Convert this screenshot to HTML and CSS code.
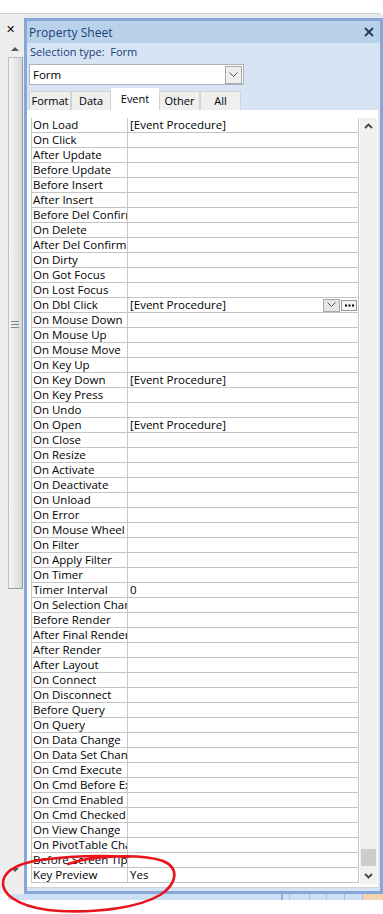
FILE: index.html
```html
<!DOCTYPE html>
<html>
<head>
<meta charset="utf-8">
<link rel="stylesheet" href="styles.css">
</head>
<body>
<div class="topbar"></div>
<div class="main">
  <div class="strip">
    <div class="strip-x">&#x2715;</div>
    <div class="tri-up"></div>
    <div class="sthumb"><div class="grip"></div></div>
    <div class="strip-space"></div>
    <div class="tri-down"></div>
  </div>
  <div class="panel">
    <div class="phead">
      <span class="ptitle">Property Sheet</span>
      <svg class="pclose" width="10" height="10" viewBox="0 0 10 10"><path d="M1 1 L9 9 M9 1 L1 9" stroke="#1b3a6b" stroke-width="1.8" fill="none"/></svg>
    </div>
    <div class="seltype">Selection type:&nbsp; Form</div>
    <div class="combo">
      <span class="combo-text">Form</span>
      <span class="combo-btn"><svg width="9" height="6" viewBox="0 0 9 6"><path d="M0.5 0.5 L4.5 4.5 L8.5 0.5" stroke="#555" stroke-width="1" fill="none"/></svg></span>
    </div>
    <div class="tabs">
      <div class="tab t-format">Format</div>
      <div class="tab t-data">Data</div>
      <div class="tab t-event active">Event</div>
      <div class="tab t-other">Other</div>
      <div class="tab t-all">All</div>
    </div>
    <div class="pane">
      <div class="grid">
        <div class="row"><div class="k">On Load</div><div class="v">[Event Procedure]</div></div>
        <div class="row"><div class="k">On Click</div><div class="v"></div></div>
        <div class="row"><div class="k">After Update</div><div class="v"></div></div>
        <div class="row"><div class="k">Before Update</div><div class="v"></div></div>
        <div class="row"><div class="k">Before Insert</div><div class="v"></div></div>
        <div class="row"><div class="k">After Insert</div><div class="v"></div></div>
        <div class="row"><div class="k">Before Del Confirm</div><div class="v"></div></div>
        <div class="row"><div class="k">On Delete</div><div class="v"></div></div>
        <div class="row"><div class="k">After Del Confirm</div><div class="v"></div></div>
        <div class="row"><div class="k">On Dirty</div><div class="v"></div></div>
        <div class="row"><div class="k">On Got Focus</div><div class="v"></div></div>
        <div class="row"><div class="k">On Lost Focus</div><div class="v"></div></div>
        <div class="row"><div class="k">On Dbl Click</div><div class="v v-active"><span class="vt">[Event Procedure]</span><span class="dd-btn"><svg width="9" height="6" viewBox="0 0 9 6"><path d="M0.5 0.5 L4.5 4.5 L8.5 0.5" stroke="#555" stroke-width="1" fill="none"/></svg></span><span class="build-btn"><svg width="9" height="3" viewBox="0 0 9 3"><rect x="0" y="0.5" width="2" height="2" fill="#000"/><rect x="3.5" y="0.5" width="2" height="2" fill="#000"/><rect x="7" y="0.5" width="2" height="2" fill="#000"/></svg></span></div></div>
        <div class="row"><div class="k">On Mouse Down</div><div class="v"></div></div>
        <div class="row"><div class="k">On Mouse Up</div><div class="v"></div></div>
        <div class="row"><div class="k">On Mouse Move</div><div class="v"></div></div>
        <div class="row"><div class="k">On Key Up</div><div class="v"></div></div>
        <div class="row"><div class="k">On Key Down</div><div class="v">[Event Procedure]</div></div>
        <div class="row"><div class="k">On Key Press</div><div class="v"></div></div>
        <div class="row"><div class="k">On Undo</div><div class="v"></div></div>
        <div class="row"><div class="k">On Open</div><div class="v">[Event Procedure]</div></div>
        <div class="row"><div class="k">On Close</div><div class="v"></div></div>
        <div class="row"><div class="k">On Resize</div><div class="v"></div></div>
        <div class="row"><div class="k">On Activate</div><div class="v"></div></div>
        <div class="row"><div class="k">On Deactivate</div><div class="v"></div></div>
        <div class="row"><div class="k">On Unload</div><div class="v"></div></div>
        <div class="row"><div class="k">On Error</div><div class="v"></div></div>
        <div class="row"><div class="k">On Mouse Wheel</div><div class="v"></div></div>
        <div class="row"><div class="k">On Filter</div><div class="v"></div></div>
        <div class="row"><div class="k">On Apply Filter</div><div class="v"></div></div>
        <div class="row"><div class="k">On Timer</div><div class="v"></div></div>
        <div class="row"><div class="k">Timer Interval</div><div class="v">0</div></div>
        <div class="row"><div class="k">On Selection Change</div><div class="v"></div></div>
        <div class="row"><div class="k">Before Render</div><div class="v"></div></div>
        <div class="row"><div class="k">After Final Render</div><div class="v"></div></div>
        <div class="row"><div class="k">After Render</div><div class="v"></div></div>
        <div class="row"><div class="k">After Layout</div><div class="v"></div></div>
        <div class="row"><div class="k">On Connect</div><div class="v"></div></div>
        <div class="row"><div class="k">On Disconnect</div><div class="v"></div></div>
        <div class="row"><div class="k">Before Query</div><div class="v"></div></div>
        <div class="row"><div class="k">On Query</div><div class="v"></div></div>
        <div class="row"><div class="k">On Data Change</div><div class="v"></div></div>
        <div class="row"><div class="k">On Data Set Change</div><div class="v"></div></div>
        <div class="row"><div class="k">On Cmd Execute</div><div class="v"></div></div>
        <div class="row"><div class="k">On Cmd Before Execute</div><div class="v"></div></div>
        <div class="row"><div class="k">On Cmd Enabled</div><div class="v"></div></div>
        <div class="row"><div class="k">On Cmd Checked</div><div class="v"></div></div>
        <div class="row"><div class="k">On View Change</div><div class="v"></div></div>
        <div class="row"><div class="k">On PivotTable Change</div><div class="v"></div></div>
        <div class="row"><div class="k">Before Screen Tip</div><div class="v"></div></div>
        <div class="row"><div class="k">Key Preview</div><div class="v">Yes</div></div>
      </div>
      <div class="vscroll">
        <svg class="chev" width="9" height="6" viewBox="0 0 9 6"><path d="M1 5 L4.5 1.5 L8 5" stroke="#444" stroke-width="1.8" fill="none"/></svg>
        <div class="vs-track"></div>
        <div class="vs-thumb"></div>
        <svg class="chev" width="9" height="6" viewBox="0 0 9 6"><path d="M1 1 L4.5 4.5 L8 1" stroke="#444" stroke-width="1.8" fill="none"/></svg>
      </div>
    </div>
  </div>
</div>
<div class="bottombar">
  <div class="bb-gap"></div>
  <div class="bb-seg bb-wide"></div>
  <div class="bb-seg bb-s1"></div>
  <div class="bb-seg bb-s2"></div>
  <div class="bb-seg bb-s3"></div>
  <div class="bb-seg bb-s4"></div>
  <div class="bb-seg bb-s5"></div>
  <div class="bb-hot"></div>
</div>
<svg class="annot" width="383" height="914" viewBox="0 0 383 914">
  <path d="M68 864 C 90 856, 140 853, 163 861 C 180 868, 177 884, 160 895 C 140 907, 100 913, 60 911 C 25 909, 5 898, 3 885 C 2 872, 15 864, 40 860 C 70 856, 100 855, 128 857" stroke="#e8141c" stroke-width="2.6" fill="none" stroke-linecap="round"/>
</svg>
</body>
</html>
```
FILE: styles.css
```css
* { box-sizing: border-box; }
html, body { margin: 0; padding: 0; }
body {
  width: 383px;
  height: 914px;
  overflow: hidden;
  background: #ffffff;
  font-family: "Open Sans", "Noto Sans", sans-serif;
  font-size: 11.5px;
  color: #000;
  position: relative;
  display: flex;
  flex-direction: column;
}
.topbar {
  height: 14px;
  flex: none;
  background: #ffffff;
  border-bottom: 1px solid #cfcfcf;
  margin-right: 3px;
}
.main {
  height: 880px;
  flex: none;
  display: flex;
  background: #e4e9ef;
}
.strip {
  width: 24px;
  flex: none;
  background: #eeeeee;
  display: flex;
  flex-direction: column;
  align-items: center;
}
.strip-x {
  margin-top: 9px;
  margin-right: 3px;
  height: 14px;
  font-size: 11px;
  line-height: 14px;
  font-weight: bold;
  font-family: "DejaVu Sans", sans-serif;
}
.tri-up {
  margin-top: 10px;
  margin-left: 6px;
  width: 0; height: 0;
  border-left: 4px solid transparent;
  border-right: 4px solid transparent;
  border-bottom: 4px solid #505a66;
}
.sthumb {
  margin-top: 6px;
  margin-left: 6px;
  width: 15px;
  height: 532px;
  background: linear-gradient(to right, #f6f6f6, #e3e3e3 70%, #d6d6d6);
  border: 1px solid #b8bfca;
  border-right-color: #8f9aaa;
  border-bottom-color: #8f9aaa;
  border-radius: 1px;
  display: flex;
  align-items: center;
  justify-content: center;
}
.grip {
  width: 8px;
  height: 7px;
  border-top: 1px solid #7d8591;
  border-bottom: 1px solid #7d8591;
  margin-top: 2px;
  background: linear-gradient(#7d8591, #7d8591) center/8px 1px no-repeat;
}
.strip-space { flex: 1; }
.tri-down {
  margin-bottom: 22px;
  margin-left: 6px;
  width: 0; height: 0;
  border-left: 4px solid transparent;
  border-right: 4px solid transparent;
  border-top: 4px solid #505a66;
}
.panel {
  flex: 1;
  margin-top: 4px;
  border: 3px solid #87a7d6;
  background: #d6e4f3;
  display: flex;
  flex-direction: column;
}
.phead {
  height: 22px;
  flex: none;
  background: #bad1ea;
  display: flex;
  align-items: center;
  justify-content: space-between;
  padding-left: 2px;
  padding-right: 6px;
}
.ptitle {
  font-size: 12px;
  color: #17407a;
}
.pclose { display: block; }
.seltype {
  height: 19px;
  flex: none;
  line-height: 17px;
  padding-left: 3px;
  color: #17407a;
  font-size: 11px;
}
.combo {
  margin-top: 2px;
  margin-left: 2px;
  width: 215px;
  height: 21px;
  flex: none;
  background: #ffffff;
  border: 1px solid #a9b1bd;
  display: flex;
  align-items: center;
  justify-content: space-between;
  padding-left: 3px;
  padding-right: 1px;
}
.combo-btn {
  width: 17px;
  height: 18px;
  background: #eeeeee;
  border: 1px solid #a8a8a8;
  display: flex;
  align-items: center;
  justify-content: center;
}
.tabs {
  margin-top: 6px;
  margin-left: 2px;
  height: 19px;
  flex: none;
  display: flex;
  align-items: flex-end;
}
.tab {
  height: 19px;
  background: #efefef;
  border: 1px solid #d3d3d3;
  border-bottom: none;
  line-height: 18px;
  text-align: center;
  font-size: 11px;
  white-space: nowrap;
}
.t-format { width: 42px; }
.t-data { width: 40px; }
.t-event { width: 48px; }
.t-other { width: 41px; }
.t-all { width: 41px; }
.tab.active {
  height: 22px;
  background: #ffffff;
  border-color: #ffffff;
  line-height: 20px;
}
.pane {
  flex: 1;
  margin-right: 2px;
  margin-bottom: 3px;
  background: #ffffff;
  display: flex;
  align-items: flex-start;
  padding: 8px 1px 0 4px;
  border-bottom: 1px solid #d2d2d2;
}
.grid {
  width: 328px;
  border-left: 1px solid #c8c8c8;
  border-right: 1px solid #c8c8c8;
}
.row {
  height: 15px;
  display: flex;
  border-bottom: 1px solid #c4c4c4;
}
.k {
  width: 96px;
  flex: none;
  border-right: 1px solid #c8c8c8;
  padding-left: 1px;
  line-height: 14px;
  white-space: nowrap;
  overflow: hidden;
}
.v {
  flex: 1;
  padding-left: 2px;
  line-height: 14px;
  white-space: nowrap;
  overflow: hidden;
}
.v-active {
  display: flex;
  align-items: center;
  padding-right: 1px;
}
.vt { flex: 1; }
.dd-btn {
  width: 17px;
  height: 13px;
  background: #e6e6e6;
  border: 1px solid #a8a8a8;
  display: flex;
  align-items: center;
  justify-content: center;
  margin-right: 1px;
}
.build-btn {
  width: 16px;
  height: 11px;
  background: #f4f4f4;
  border: 1px solid #9a9a9a;
  display: flex;
  align-items: center;
  justify-content: center;
}
.vscroll {
  margin-left: 1px;
  width: 17px;
  height: 766px;
  background: #f0f0f0;
  display: flex;
  flex-direction: column;
  align-items: center;
  padding-top: 5px;
  padding-bottom: 5px;
}
.chev { display: block; flex: none; }
.vs-track { flex: 1; }
.vs-thumb {
  width: 15px;
  height: 17px;
  background: #cdcdcd;
  margin-bottom: 7px;
}
.bottombar {
  height: 6px;
  flex: none;
  display: flex;
  background: #ffffff;
}
.bb-gap { width: 8px; }
.bb-seg {
  background: #cddff5;
  border-right: 1px solid #a7c0e2;
}
.bb-wide { width: 275px; border-right: 2px solid #8fb0dc; }
.bb-s1 { width: 7px; }
.bb-s2 { width: 20px; }
.bb-s3 { width: 17px; }
.bb-s4 { width: 18px; }
.bb-s5 { width: 18px; }
.bb-hot { flex: 1; background: #f2d4b0; }
.annot {
  position: absolute;
  left: 0;
  top: 0;
  pointer-events: none;
}
```
